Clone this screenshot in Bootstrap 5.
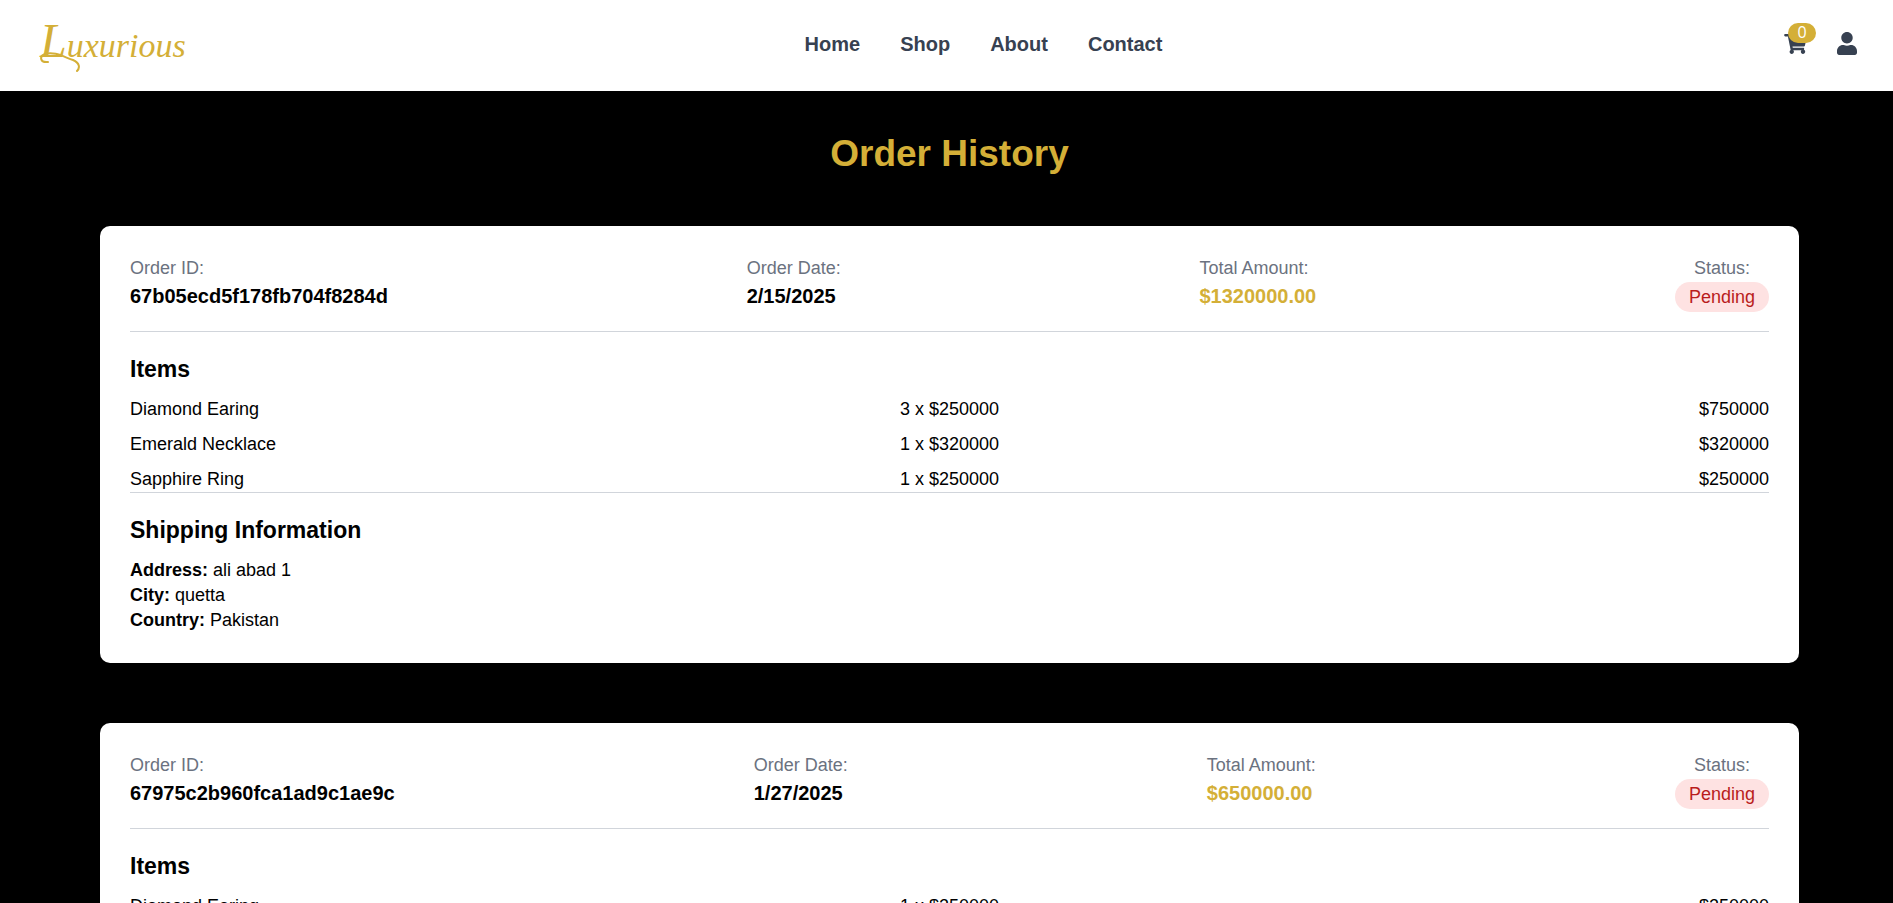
<!DOCTYPE html>
<html lang="en">
<head>
<meta charset="utf-8">
<meta name="viewport" content="width=device-width, initial-scale=1">
<title>Luxurious - Order History</title>
<link href="https://cdn.jsdelivr.net/npm/bootstrap@5.3.0/dist/css/bootstrap.min.css" rel="stylesheet">
<style>
  :root { --gold: #d4af37; --slate: #374151; --line: #d1d5db; }
  body { background: #000; color: #000; font-family: "Liberation Sans", Arial, sans-serif; font-size: 18px; line-height: 25px; }
  .site-header { min-height: 91px; padding: 0 36px 4px 40px; }
  .brand { width: 143px; color: var(--gold); font: italic 34px/48px "Liberation Serif", serif; }
  .brand:hover { color: var(--gold); }
  .brand::first-letter { font-size: 48px; }
  .brand-swash { position: absolute; left: 0; top: 30px; }
  .menu { gap: 40px; font-size: 20px; line-height: 30px; }
  .menu a { color: var(--slate); }
  .tools { gap: 30px; color: var(--slate); }
  .tools button { color: inherit; line-height: 1; }
  .cart-count { position: absolute; left: 4px; top: -11px; width: 28px; height: 20px; border-radius: 10px; background: var(--gold); color: #fff; font: 500 16px/19px "Open Sans", sans-serif; }
  .orders { padding: 40px 94px 60px 100px; }
  .page-title { color: var(--gold); font-size: 37px; line-height: 45px; margin-bottom: 50px; }
  .order { border-radius: 10px; padding: 30px; }
  .order + .order { margin-top: 60px; }
  .order-head { padding-bottom: 20px; border-bottom: 1px solid var(--line); margin-bottom: 20px; }
  .order-head dt { color: #6b7280; font-weight: 400; }
  .order-head dd { font-size: 20px; line-height: 30px; }
  .gold { color: var(--gold); }
  .order-head .status { font-size: 18px; padding: 0 14px; margin-top: 1px; margin-bottom: -1px; background: #fee2e2; color: #b91c1c; }
  .order h2 { font-size: 23px; line-height: 35px; margin-bottom: 10px; }
  .items { table-layout: fixed; border-bottom: 1px solid var(--line); margin-bottom: 20px; }
  .items td { padding: 0; }
  .items tr + tr td { padding-top: 10px; }
</style>
</head>
<body>
<header class="site-header bg-white d-flex justify-content-between align-items-center">
  <a href="#" class="brand position-relative d-block text-decoration-none">Luxurious
    <svg class="brand-swash" width="42" height="26" viewBox="0 0 42 26" fill="none" stroke="currentColor" stroke-width="2" stroke-linecap="round" aria-hidden="true"><path d="M8 15C0 16 -1 9 5 7C14 4 24 10 33 13C40 16 40 21 37 24"/></svg>
  </a>
  <nav class="menu d-flex fw-bold" aria-label="Main">
    <a class="text-decoration-none" href="#">Home</a>
    <a class="text-decoration-none" href="#">Shop</a>
    <a class="text-decoration-none" href="#">About</a>
    <a class="text-decoration-none" href="#">Contact</a>
  </nav>
  <div class="tools d-flex align-items-center">
    <button type="button" class="position-relative border-0 bg-transparent p-0" aria-label="Cart">
      <svg class="d-block" width="23" height="20" viewBox="0 0 576 512" fill="currentColor" aria-hidden="true"><path d="M528.12 301.319l47.273-208C578.806 78.301 567.391 64 551.99 64H159.208l-9.166-44.81C147.758 8.021 137.93 0 126.529 0H24C10.745 0 0 10.745 0 24v16c0 13.255 10.745 24 24 24h69.883l70.248 343.435C147.325 417.1 136 435.222 136 456c0 30.928 25.072 56 56 56s56-25.072 56-56c0-15.674-6.447-29.835-16.824-40h209.647C430.447 426.165 424 440.326 424 456c0 30.928 25.072 56 56 56s56-25.072 56-56c0-22.172-12.888-41.332-31.579-50.405l5.517-24.276c3.413-15.018-8.002-29.319-23.403-29.319H218.117l-6.545-32h293.145c11.206 0 20.92-7.754 23.403-18.681z"/></svg>
      <span class="cart-count text-center">0</span>
    </button>
    <button type="button" class="border-0 bg-transparent p-0" aria-label="Account">
      <svg class="d-block" width="20" height="23" viewBox="0 0 448 512" fill="currentColor" aria-hidden="true"><path d="M224 256c70.7 0 128-57.3 128-128S294.7 0 224 0 96 57.3 96 128s57.3 128 128 128zm89.6 32h-16.7c-22.2 10.2-46.9 16-72.9 16s-50.6-5.8-72.9-16h-16.7C60.2 288 0 348.2 0 422.4V464c0 26.5 21.5 48 48 48h352c26.5 0 48-21.5 48-48v-41.6c0-74.2-60.2-134.4-134.4-134.4z"/></svg>
    </button>
  </div>
</header>

<main class="orders">
  <h1 class="page-title fw-bold text-center">Order History</h1>

  <article class="order bg-white">
    <dl class="order-head d-flex justify-content-between">
      <div><dt>Order ID:</dt><dd class="mb-0 fw-bold">67b05ecd5f178fb704f8284d</dd></div>
      <div><dt>Order Date:</dt><dd class="mb-0 fw-bold">2/15/2025</dd></div>
      <div><dt>Total Amount:</dt><dd class="mb-0 fw-bold gold">$1320000.00</dd></div>
      <div class="text-center"><dt>Status:</dt><dd class="status rounded-pill">Pending</dd></div>
    </dl>
    <h2 class="fw-bold">Items</h2>
    <table class="items w-100">
      <tr><td>Diamond Earing</td><td class="text-center">3 x $250000</td><td class="text-end">$750000</td></tr>
      <tr><td>Emerald Necklace</td><td class="text-center">1 x $320000</td><td class="text-end">$320000</td></tr>
      <tr><td>Sapphire Ring</td><td class="text-center">1 x $250000</td><td class="text-end">$250000</td></tr>
    </table>
    <h2 class="fw-bold">Shipping Information</h2>
    <p class="mb-0"><strong>Address:</strong> ali abad 1</p>
    <p class="mb-0"><strong>City:</strong> quetta</p>
    <p class="mb-0"><strong>Country:</strong> Pakistan</p>
  </article>

  <article class="order bg-white">
    <dl class="order-head d-flex justify-content-between">
      <div><dt>Order ID:</dt><dd class="mb-0 fw-bold">67975c2b960fca1ad9c1ae9c</dd></div>
      <div><dt>Order Date:</dt><dd class="mb-0 fw-bold">1/27/2025</dd></div>
      <div><dt>Total Amount:</dt><dd class="mb-0 fw-bold gold">$650000.00</dd></div>
      <div class="text-center"><dt>Status:</dt><dd class="status rounded-pill">Pending</dd></div>
    </dl>
    <h2 class="fw-bold">Items</h2>
    <table class="items w-100">
      <tr><td>Diamond Earing</td><td class="text-center">1 x $250000</td><td class="text-end">$250000</td></tr>
    </table>
  </article>
</main>
<script src="https://cdn.jsdelivr.net/npm/bootstrap@5.3.0/dist/js/bootstrap.bundle.min.js"></script>
</body>
</html>
